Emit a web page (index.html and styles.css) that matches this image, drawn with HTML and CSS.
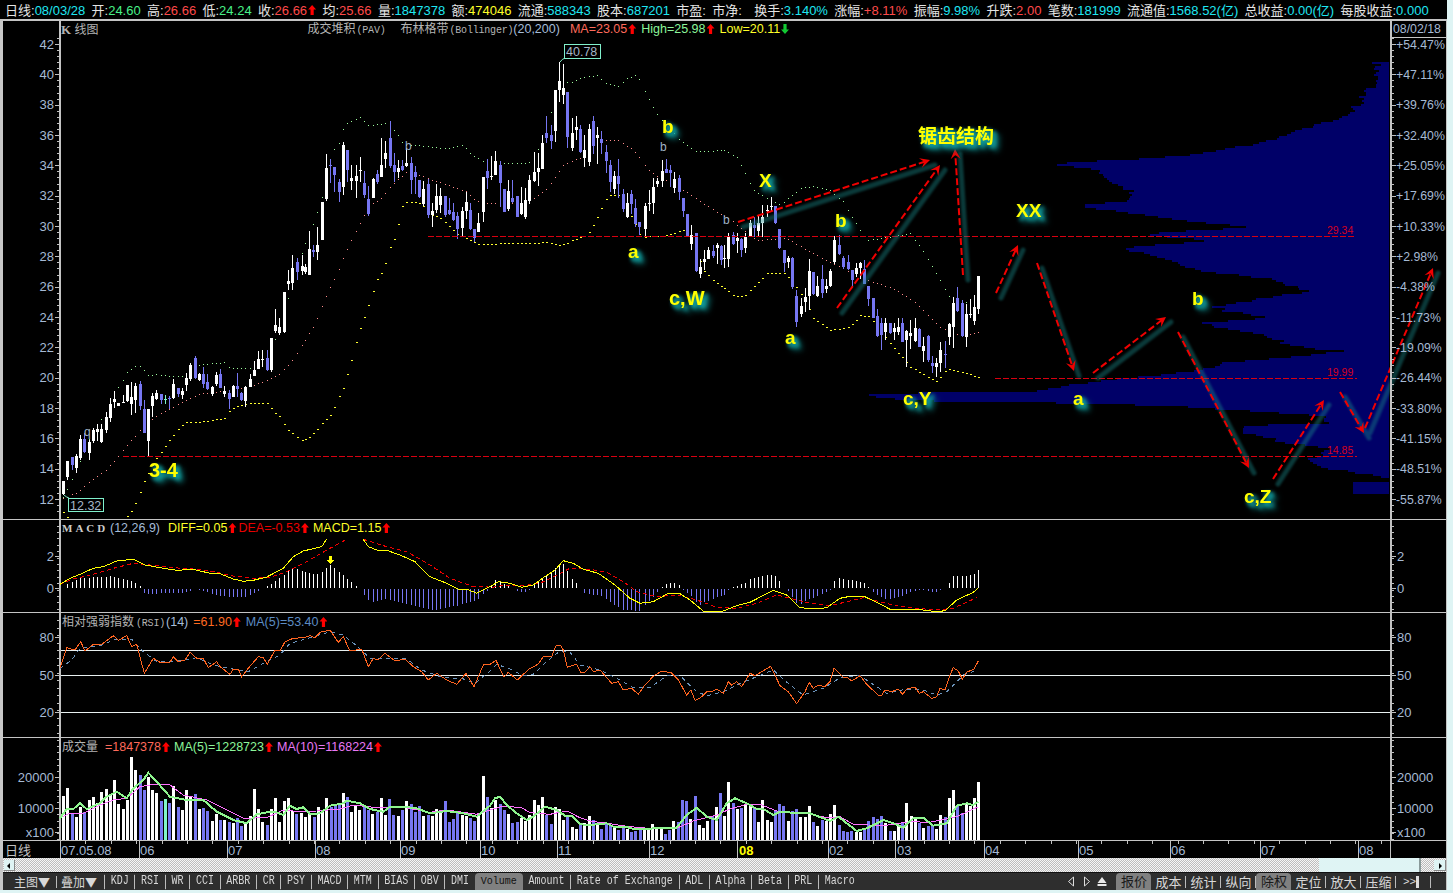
FILE: index.html
```html
<!DOCTYPE html>
<html lang="zh">
<head>
<meta charset="utf-8">
<title>K线图</title>
<link rel="stylesheet" href="styles.css">
</head>
<body>
<div class="app">
  <header class="quote">
    <span class="q"><span class="k">日线:</span><span class="cy">08/03/28</span></span>
    <span class="q"><span class="k">开:</span><span class="gr">24.60</span></span>
    <span class="q"><span class="k">高:</span><span class="rd">26.66</span></span>
    <span class="q"><span class="k">低:</span><span class="gr">24.24</span></span>
    <span class="q"><span class="k">收:</span><span class="rd">26.66</span><span class="up"></span></span>
    <span class="q"><span class="k">均:</span><span class="rd">25.66</span></span>
    <span class="q"><span class="k">量:</span><span class="cy">1847378</span></span>
    <span class="q"><span class="k">额:</span><span class="ye">474046</span></span>
    <span class="q"><span class="k">流通:</span><span class="cy">588343</span></span>
    <span class="q"><span class="k">股本:</span><span class="cy">687201</span></span>
    <span class="q"><span class="k">市盈:</span></span>
    <span class="q"><span class="k">市净:</span></span>
    <span class="q q-far"><span class="k">换手:</span><span class="cy">3.140%</span></span>
    <span class="q"><span class="k">涨幅:</span><span class="rd">+8.11%</span></span>
    <span class="q"><span class="k">振幅:</span><span class="cy">9.98%</span></span>
    <span class="q"><span class="k">升跌:</span><span class="rd">2.00</span></span>
    <span class="q"><span class="k">笔数:</span><span class="cy">181999</span></span>
    <span class="q"><span class="k">流通值:</span><span class="cy">1568.52(亿)</span></span>
    <span class="q"><span class="k">总收益:</span><span class="cy">0.00(亿)</span></span>
    <span class="q"><span class="k">每股收益:</span><span class="cy">0.000</span></span>
  </header>

  <main class="chart">
    <section class="panel panel-main">
      <svg id="main" class="plot" width="1443" height="498" viewBox="3 21 1443 498">
        <g id="main-g"></g>
        <text class="ax r" x="1393" y="33">08/02/18</text>
        <text class="ax e" x="54" y="48.5">42</text><text class="ax e" x="54" y="78.8">40</text><text class="ax e" x="54" y="109.2">38</text><text class="ax e" x="54" y="139.5">36</text>
        <text class="ax e" x="54" y="169.8">34</text><text class="ax e" x="54" y="200.2">32</text><text class="ax e" x="54" y="230.5">30</text><text class="ax e" x="54" y="260.8">28</text>
        <text class="ax e" x="54" y="291.2">26</text><text class="ax e" x="54" y="321.5">24</text><text class="ax e" x="54" y="351.8">22</text><text class="ax e" x="54" y="382.2">20</text>
        <text class="ax e" x="54" y="412.5">18</text><text class="ax e" x="54" y="442.8">16</text><text class="ax e" x="54" y="473.2">14</text><text class="ax e" x="54" y="503.5">12</text>
        <text class="ax r" x="1396" y="48.5">+54.47%</text><text class="ax r" x="1396" y="78.8">+47.11%</text><text class="ax r" x="1396" y="109.2">+39.76%</text><text class="ax r" x="1396" y="139.5">+32.40%</text>
        <text class="ax r" x="1396" y="169.8">+25.05%</text><text class="ax r" x="1396" y="200.2">+17.69%</text><text class="ax r" x="1396" y="230.5">+10.33%</text><text class="ax r" x="1396" y="260.8">+2.98%</text>
        <text class="ax r" x="1396" y="291.2">-4.38%</text><text class="ax r" x="1396" y="321.5">-11.73%</text><text class="ax r" x="1396" y="351.8">-19.09%</text><text class="ax r" x="1396" y="382.2">-26.44%</text>
        <text class="ax r" x="1396" y="412.5">-33.80%</text><text class="ax r" x="1396" y="442.8">-41.15%</text><text class="ax r" x="1396" y="473.2">-48.51%</text><text class="ax r" x="1396" y="503.5">-55.87%</text>

        <text class="lvl" x="1327" y="234">29.34</text>
        <text class="lvl" x="1327" y="376">19.99</text>
        <text class="lvl" x="1327" y="454">14.85</text>

        <rect class="box" x="564.5" y="44.5" width="36" height="14"></rect>
        <text class="boxt" x="566" y="56">40.78</text>
        <rect class="box" x="68.5" y="498.5" width="35" height="13"></rect>
        <text class="boxt" x="70" y="510">12.32</text>

        <text class="tiny" x="84" y="436">q</text>
        <text class="tiny" x="405" y="150">b</text>
        <text class="tiny" x="660" y="151">b</text>
        <text class="tiny" x="723" y="224">b</text>

        <text class="wave w20" x="149" y="477">3-4</text>
        <text class="wave" x="662" y="133">b</text>
        <text class="wave" x="628" y="258">a</text>
        <text class="wave w20" x="669" y="305">c,W</text>
        <text class="wave" x="759" y="187">X</text>
        <text class="wave" x="835" y="227">b</text>
        <text class="wave" x="785" y="344">a</text>
        <text class="wave" x="903" y="405">c,Y</text>
        <text class="wave" x="918" y="143">锯齿结构</text>
        <text class="wave" x="1016" y="217">XX</text>
        <text class="wave" x="1073" y="405">a</text>
        <text class="wave" x="1192" y="305">b</text>
        <text class="wave" x="1244" y="503">c,Z</text>
      </svg>
      <div class="legend legend-main">
        <span class="gy title-k"><b>K</b> 线图</span>
        <span class="gy spaced-a">成交堆积<small>(PAV)</small></span>
        <span class="gy spaced-b">布林格带<small>(Bollinger)</small></span>
        <span class="bl">(20,200)</span>
        <span class="sa"><span class="sal">MA=23.05</span><span class="up"></span></span>
        <span class="lg"><span class="lgr">High=25.98</span><span class="up"></span></span>
        <span class="lg"><span class="ye">Low=20.11</span><span class="down"></span></span>
      </div>
    </section>

    <section class="panel panel-macd">
      <svg id="macd" class="plot" width="1443" height="92" viewBox="3 520 1443 92">
        <g id="macd-g"></g>
        <text class="ax e" x="54" y="561">2</text><text class="ax e" x="54" y="593">0</text>
        <text class="ax" x="1397" y="561">2</text><text class="ax" x="1397" y="593">0</text>
      </svg>
      <div class="legend legend-macd">
        <span class="macd-t">MACD</span>
        <span class="bl">(12,26,9)</span>
        <span class="lg lg-diff"><span class="ye">DIFF=0.05</span><span class="up"></span></span>
        <span class="lg lg-dea"><span class="dr">DEA=-0.53</span><span class="up"></span></span>
        <span class="lg lg-val"><span class="ye">MACD=1.15</span><span class="up"></span></span>
      </div>
    </section>

    <section class="panel panel-rsi">
      <svg id="rsi" class="plot" width="1443" height="124" viewBox="3 613 1443 124">
        <g id="rsi-g"></g>
        <text class="ax e" x="54" y="642">80</text><text class="ax e" x="54" y="680">50</text><text class="ax e" x="54" y="717">20</text>
        <text class="ax" x="1397" y="642">80</text><text class="ax" x="1397" y="680">50</text><text class="ax" x="1397" y="717">20</text>
      </svg>
      <div class="legend legend-rsi">
        <span class="gy">相对强弱指数<small>(RSI)</small></span>
        <span class="bl">(14)</span>
        <span class="lg"><span class="or">=61.90</span><span class="up"></span></span>
        <span class="lg"><span class="st">MA(5)=53.40</span><span class="up"></span></span>
      </div>
    </section>

    <section class="panel panel-vol">
      <svg id="vol" class="plot" width="1443" height="102" viewBox="3 738 1443 102">
        <g id="vol-g"></g>
        <text class="ax e" x="54" y="782">20000</text><text class="ax e" x="54" y="813">10000</text><text class="ax e" x="54" y="837">x100</text>
        <text class="ax" x="1397" y="782">20000</text><text class="ax" x="1397" y="813">10000</text><text class="ax" x="1397" y="837">x100</text>
      </svg>
      <div class="legend legend-vol">
        <span class="gy">成交量</span>
        <span class="lg"><span class="sal">=1847378</span><span class="up"></span></span>
        <span class="lg"><span class="lgr">MA(5)=1228723</span><span class="up"></span></span>
        <span class="lg"><span class="pk">MA(10)=1168224</span><span class="up"></span></span>
      </div>
    </section>

    <div class="dates">
      <svg id="dates" class="plot" width="1443" height="17" viewBox="3 841 1443 17">
        <g id="dates-g"></g>
        <text class="dt gy-t" x="5" y="855">日线</text>
        <text class="dt" x="61" y="855">07.05.08</text><text class="dt" x="140" y="855">06</text><text class="dt" x="228" y="855">07</text>
        <text class="dt" x="316" y="855">08</text><text class="dt" x="401" y="855">09</text><text class="dt" x="481" y="855">10</text>
        <text class="dt" x="558" y="855">11</text><text class="dt" x="650" y="855">12</text><text class="dt dt-y" x="739" y="855">08</text>
        <text class="dt" x="829" y="855">02</text><text class="dt" x="897" y="855">03</text><text class="dt" x="985" y="855">04</text>
        <text class="dt" x="1079" y="855">05</text><text class="dt" x="1171" y="855">06</text><text class="dt" x="1261" y="855">07</text><text class="dt" x="1359" y="855">08</text>
      </svg>
    </div>

    <div class="scrollbar">
      <span class="sb-btn sb-left"></span>
      <span class="sb-track"></span>
      <span class="sb-thumb"></span>
      <span class="sb-gap"></span>
      <span class="sb-btn sb-right"></span>
    </div>

    <nav class="tabs">
      <span class="tab cn first">主图▼</span><span class="tab cn">叠加▼</span>
      <span class="tab">KDJ</span><span class="tab">RSI</span><span class="tab">WR</span><span class="tab">CCI</span><span class="tab">ARBR</span><span class="tab">CR</span><span class="tab">PSY</span><span class="tab">MACD</span><span class="tab">MTM</span><span class="tab">BIAS</span><span class="tab">OBV</span><span class="tab">DMI</span>
      <span class="tab active">Volume</span>
      <span class="tab nb">Amount</span><span class="tab">Rate of Exchange</span><span class="tab">ADL</span><span class="tab">Alpha</span><span class="tab">Beta</span><span class="tab">PRL</span><span class="tab">Macro</span>
      <span class="tools">
        <span class="tool-ic">
          <svg width="9" height="11" viewBox="0 0 9 11"><path d="M6.5 1 1.5 5.5 6.5 10z" fill="none" stroke="#ddd"/></svg>
          <svg width="9" height="11" viewBox="0 0 9 11"><path d="M2.5 1 7.5 5.5 2.5 10z" fill="none" stroke="#ddd"/></svg>
          <svg width="10" height="11" viewBox="0 0 10 11"><path d="M5 1 9.5 7H.5z M.5 8h9v2h-9z" fill="#e8e8e8"/></svg>
        </span>
        <span class="tool active">报价</span><span class="tool">成本</span><span class="tool">统计</span><span class="tool">纵向</span><span class="tool active">除权</span><span class="tool">定位</span><span class="tool">放大</span><span class="tool">压缩</span><span class="tool more">&gt;&gt;<i class="bar"></i></span>
      </span>
    </nav>
  </main>
</div>
<script src="chart.js"></script>
</body>
</html>
```
FILE: styles.css
```css
* { box-sizing: border-box; }
html, body { margin: 0; height: 100%; overflow: hidden; background: #dff4f4; }
body { font: 13px/1 "Liberation Sans", "Noto Sans CJK SC", sans-serif; color: #ccc; }

.app { width: 1447px; display: flex; flex-direction: column; }

.quote { height: 21px; padding: 3px 0 0 5px; background: #000; border-bottom: 2px solid #c4c4c4; display: flex; gap: 6.3px; white-space: nowrap; overflow: hidden; }
.q { display: inline-flex; align-items: center; height: 14px; }
.q-far { margin-left: 6px; }
.k { color: #e4e4e4; }
.cy { color: #1fe6f2; }
.gr { color: #48f088; }
.rd { color: #ff4a4a; }
.ye { color: #ffff28; }
.sal { color: #ff6a5a; }
.lgr { color: #8cf59a; }
.pk { color: #e878f4; }
.dr { color: #e80000; }
.or { color: #ff6a20; }
.st { color: #5c8cc4; }
.bl { color: #a4bcd8; }
.gy { color: #b4b4b4; font-size: 12px; }
.gy small { font: 10px "Liberation Mono", monospace; letter-spacing: -.2px; }

.up, .down { display: inline-block; width: 8px; height: 10px; margin-left: 1px; clip-path: polygon(50% 0, 100% 45%, 70% 45%, 70% 100%, 30% 100%, 30% 45%, 0 45%); background: #f00; }
.down { background: #12c832; transform: rotate(180deg); }

.chart { border-left: 3px solid #c8c8c8; border-right: 1px solid #c4c4c4; background: #000; display: flex; flex-direction: column; }

.panel { position: relative; background: #000; border-bottom: 1px solid #c4c4c4; }
.panel-main { height: 499px; }
.panel-macd { height: 93px; }
.panel-rsi { height: 125px; }
.panel-vol { height: 103px; }
.plot { display: block; overflow: hidden; }

.legend { position: absolute; display: flex; align-items: center; white-space: nowrap; height: 14px; font-size: 12.5px; }
.lg, .sa { display: inline-flex; align-items: center; }
.legend-main { left: 58px; top: 1px; }
.title-k b { font-family: "Liberation Serif", serif; font-size: 13px; }
.spaced-a { margin-left: 209px; }
.spaced-b { margin-left: 15px; }
.legend-main .gy small { margin-left: 1px; }
.legend-main .sa { margin-left: 10px; }
.legend-main .lg { margin-left: 5px; }
.legend-macd { left: 59px; top: 1px; gap: 4px; }
.macd-t { font: bold 11px "Liberation Serif", serif; letter-spacing: 3px; color: #ccc; width: 44px; }
.lg-diff { margin-left: 4px; }
.lg-dea { margin-left: -2px; }
.lg-val { margin-left: 0; }
.legend-rsi { left: 59px; top: 2px; gap: 5px; }
.legend-rsi .gy small { margin-left: 2px; }
.legend-rsi .bl { margin-left: -4px; }
.legend-vol { left: 59px; top: 2px; gap: 4px; }
.legend-vol .gy { margin-right: 3px; }

.ax { fill: #a6bad4; font-size: 13px; }
.r { font-size: 12.3px; }
.e { text-anchor: end; }
.lvl { fill: #d40020; font-size: 10.5px; }
.box { fill: #000; stroke: #80f0cc; stroke-width: 1; }
.boxt { fill: #a6b6c8; font-size: 12.5px; }
.tiny { fill: #a0b4c8; font-size: 12px; }
.wave { fill: #ffff00; font: bold 19px "Liberation Sans", "Noto Sans CJK SC", sans-serif; filter: drop-shadow(3px 3px 2px #10a4a4) drop-shadow(3px 3px 2px #0e8c8c); }
.w20 { font-size: 20px; }

.dates { height: 17px; background: #000; }
.dt { fill: #a6bad4; font-size: 13px; }
.gy-t { fill: #c0c0c0; font-size: 13px; }
.dt-y { fill: #ffff00; font-weight: bold; font-size: 13px; }

.scrollbar { height: 14px; display: flex; align-items: center; background: repeating-conic-gradient(#f6f6f6 0 25%, #bdbdbd 0 50%) 0 0 / 2px 2px; }
.sb-track { flex: 1; }
.sb-btn { position: relative; width: 11px; height: 11px; background: #dff4f4; border-right: 1px solid #888; border-bottom: 1px solid #888; }
.sb-left { margin-left: 1px; }
.sb-right { width: 12px; }
.sb-btn::after { content: ""; position: absolute; top: 3px; border: 3px solid transparent; }
.sb-left::after { left: 0; border-right-color: #000; }
.sb-right::after { left: 5px; border-left-color: #000; }
.sb-thumb { width: 102px; height: 14px; background: #dff4f4; border-right: 2px solid #8a9a9a; }
.sb-gap { width: 13px; }

.tabs { height: 18px; background: #2e2e2e; border-top: 1px solid #111; display: flex; align-items: center; color: #d8d8d8; font: 10px "Liberation Mono", monospace; white-space: nowrap; }
.tab { height: 12px; line-height: 12px; padding: 0 5.7px; border-left: 1px solid #bbb; transform: scaleY(1.2); }
.tab.cn { font: 12px/12px "Noto Sans CJK SC", sans-serif; padding: 0 7px 0 4px; transform: none; }
.tab.first { border-left: 0; padding-left: 11px; padding-right: 6px; }
.tab.active { height: 17px; line-height: 17px; width: 48px; background: #808080; color: #111; border: 0; border-radius: 4px 4px 0 0; text-align: center; padding: 0; transform: none; }
.tab.nb { border-left: 0; }
.tools { display: flex; align-items: center; margin-left: auto; padding-right: 15px; }
.tool-ic { display: flex; gap: 6px; margin-right: 9px; align-items: center; }
.tool { height: 12px; line-height: 12px; font: 13px/12px "Noto Sans CJK SC", sans-serif; padding: 0 3px 0 4px; border-right: 1px solid #bbb; width: 35px; text-align: center; }
.tool.active { height: 17px; line-height: 16px; background: #808080; color: #1a1a1a; border: 0; border-radius: 4px 4px 0 0; }
.tool.more { display: flex; align-items: center; font: 11px "Liberation Mono", monospace; padding-left: 7px; }
.bar { display: inline-block; width: 3px; height: 12px; background: #ddd; }
```
FILE: chart.js
```js
var NS = 'http://www.w3.org/2000/svg';
function el(p, tag, a) { var e = document.createElementNS(NS, tag); for (var k in a) e.setAttribute(k, a[k]); p.appendChild(e); return e; }
function shape(g, d, fill) { return el(g, 'path', { d: d, fill: fill, 'shape-rendering': 'crispEdges' }); }
function pts(ox, oy, a) { var r = []; for (var i = 0; i < a.length; i += 2) r.push([ox + a[i] / 3, oy + a[i + 1] / 3]); return r; }
function dstr(p) { return 'M' + p.map(function (q) { return q[0].toFixed(1) + ' ' + q[1].toFixed(1); }).join('L'); }
function line(g, p, color, w, dash) { var a = { d: dstr(p), fill: 'none', stroke: color, 'stroke-width': w || 1, 'shape-rendering': 'crispEdges' }; if (dash) a['stroke-dasharray'] = dash; return el(g, 'path', a); }
function interp(p, x) {
  if (x <= p[0][0]) return p[0][1];
  for (var i = 1; i < p.length; i++) if (x <= p[i][0]) { var t = (x - p[i - 1][0]) / (p[i][0] - p[i - 1][0]); return p[i - 1][1] + t * (p[i][1] - p[i - 1][1]); }
  return p[p.length - 1][1];
}
var FRAME = '#c4c4c4', WHITE = '#ffffff', BLUE = '#7676f2', MINT = '#80f4c8';

/* candles: [x, colour(0 white,1 blue,2 mint), bodyTop, bodyBottom, high, low], in zoom units */
var A = [[190,0,603,642,603,645],[202,0,543,590,543,600],[217,1,531,556,531,570],[229,0,528,565,522,578],[241,0,477,533,465,540],[253,1,476,515,460,520],[268,0,486,518,480,540],[280,0,450,482,445,488],[292,0,448,456,432,482],[304,0,447,485,433,488],[319,0,411,450,395,458],[331,0,372,415,355,426],[343,0,357,367,333,383],[355,0,369,377,369,377],[370,0,367,369,345,369],[382,0,315,363,315,365],[394,0,351,372,307,404],[406,0,318,360,308,400],[421,1,312,378,303,390],[433,1,387,458,360,458],[445,0,387,483,387,528],[457,0,349,378,338,411],[469,0,340,357,330,360],[484,1,343,360,343,372],[496,2,356,358,345,372],[508,1,355,358,347,386],[520,0,312,355,296,358],[535,1,324,343,324,352],[547,0,334,344,324,358],[559,0,294,316,280,332],[571,0,255,296,250,303],[586,1,234,295,228,296],[598,0,282,300,280,303],[610,1,282,312,262,324],[622,1,306,327,282,330],[637,0,320,342,318,348],[649,0,285,313,277,318],[661,1,283,323,268,325],[673,0,334,342,318,350],[688,1,339,357,330,388],[700,0,318,350,315,352],[712,1,318,327,280,352],[724,1,339,361,335,363],[736,0,321,362,318,380],[751,0,297,320,283,320],[763,0,270,288,243,288],[775,0,238,266,212,266],[787,0,237,238,210,262],[802,1,234,270,210,272],[814,0,174,270,174,276],[826,0,135,153,87,158],[838,0,142,158,115,164],[853,0,36,155,36,158],[865,0,4,12,-30,30],[877,0,-36,9,-75,30],[891,1,-54,-24,-66,0]];
var B = [[5,0,693,708,660,720],[16,0,695,710,688,718],[28,0,642,720,588,720],[40,1,645,650,630,665],[52,0,630,650,575,675],[67,0,500,615,500,615],[79,0,400,492,358,497],[91,1,390,392,373,445],[103,1,396,420,396,470],[118,1,441,471,433,500],[130,0,330,455,322,480],[142,1,345,405,345,440],[154,0,430,438,390,465],[169,0,423,438,390,488],[181,0,405,407,366,440],[193,1,444,481,408,490],[205,1,491,538,454,542],[220,0,432,488,430,490],[232,1,417,442,405,448],[244,0,390,425,310,425],[256,0,354,372,318,400],[271,1,309,393,258,398],[283,1,390,411,353,440],[295,0,399,411,376,430],[307,1,394,405,376,408],[319,0,384,394,340,395],[334,1,384,435,366,478],[346,1,411,427,393,478],[358,1,435,486,435,488],[370,0,462,507,438,512],[385,1,447,540,432,548],[397,0,528,540,503,576],[409,0,483,525,447,535],[421,0,483,510,458,535],[436,1,483,540,483,545],[448,1,525,537,490,540],[460,1,531,555,503,558],[472,1,543,582,530,612],[487,0,528,580,516,602],[499,0,501,528,470,552],[511,1,525,582,503,585],[523,1,582,608,582,622],[535,0,564,590,534,592],[550,0,426,531,426,561],[562,1,408,430,372,462],[574,0,423,426,363,435],[586,0,378,420,348,420],[601,1,390,444,378,516],[613,1,462,531,462,532],[625,0,468,522,435,528],[637,1,489,501,435,505],[652,1,484,546,484,546],[664,0,504,537,457,540],[676,0,495,546,460,552],[688,0,435,498,420,508],[703,0,411,438,351,440],[715,0,399,411,355,453],[727,0,324,402,300,402],[739,1,294,309,243,325],[754,1,300,318,270,342],[766,0,165,288,165,320],[778,0,138,165,81,200],[790,0,159,180,87,207],[802,1,171,306,171,340],[817,0,294,340,250,348],[829,0,276,285,243,315],[841,1,282,351,270,355],[853,0,345,369,300,396],[868,0,282,381,267,393],[880,1,258,333,243,357],[892,0,300,309,276,387],[904,1,312,324,288,357],[919,1,351,378,330,414],[931,1,390,441,375,470],[943,0,423,462,408,477],[955,1,423,447,372,490],[970,1,477,522,462,530],[982,0,504,546,474,548],[994,1,477,507,465,537],[1006,1,519,567,492,575],[1018,1,561,575,561,600]];
var C = [[134,0,288,356,280,380],[146,0,280,281,240,303],[158,0,232,280,205,312],[170,0,213,222,205,232],[185,0,182,212,150,232],[197,1,177,188,148,190],[209,1,180,188,165,230],[221,0,208,234,187,250],[236,1,205,245,195,270],[248,1,265,303,265,320],[260,1,312,378,312,380],[272,0,376,402,345,420],[287,1,370,483,370,485],[299,0,471,492,448,504],[311,0,447,455,420,480],[323,0,420,447,410,448],[338,1,423,437,405,445],[350,0,405,415,400,462],[362,1,408,450,405,465],[373,0,445,446,405,475],[385,0,380,447,368,470],[400,1,375,403,365,405],[412,0,385,392,370,430],[424,1,388,420,385,440],[436,0,380,414,370,430],[451,0,340,380,330,380],[463,1,345,355,320,380],[475,0,340,362,318,378],[487,0,322,338,285,380],[502,0,300,302,285,320],[514,0,288,290,262,305],[526,1,288,340,288,342],[538,1,358,414,358,416],[553,1,420,460,420,487],[565,0,443,457,438,475],[577,1,444,530,440,538],[589,1,558,636,540,650],[604,0,588,613,565,622],[616,0,560,575,535,605],[628,0,484,557,448,600],[640,1,486,552,486,556],[652,0,528,557,498,560],[667,1,507,548,465,565],[679,0,528,537,508,548],[691,0,483,527,478,530],[703,0,390,455,378,462],[718,1,405,432,375,435],[730,1,443,472,438,476],[745,1,455,478,435,480],[757,1,480,510,480,530],[769,0,474,492,458,500],[781,0,458,475,455,507],[793,1,478,522,450,522],[805,1,528,568,528,588],[820,1,565,625,565,625],[832,1,618,678,598,680],[844,1,640,674,625,720],[856,0,640,667,625,690],[871,1,638,668,638,672],[883,0,654,667,640,690],[895,0,650,665,625,675],[907,1,638,695,625,695],[919,0,662,690,660,770],[931,0,668,678,630,718],[946,0,654,692,625,695],[958,1,657,710,655,712],[970,0,708,722,680,755],[985,1,677,750,675,755],[997,1,758,768,738,790],[1009,0,758,772,745,800],[1021,0,720,760,695,785],[1036,1,732,734,692,775],[1048,0,642,682,640,705],[1060,0,578,652,560,713],[1072,1,565,603,530,606],[1087,1,578,678,570,680],[1099,0,612,680,582,712],[1111,0,612,614,568,625],[1123,0,592,632,555,645],[1135,0,498,597,498,612]];
var candles = [];
function addC(ox, oy, rows) { rows.forEach(function (r) { candles.push({ x: Math.round(ox + r[0] / 3), c: r[1], t: Math.round(oy + r[2] / 3), b: Math.round(oy + r[3] / 3), h: Math.round(oy + r[4] / 3), l: Math.round(oy + r[5] / 3) }); }); }
addC(0, 280, A); addC(300, 35, B); addC(600, 110, C);
function colourAt(x) { var best = candles[0]; candles.forEach(function (c) { if (Math.abs(c.x - x) < Math.abs(best.x - x)) best = c; }); return best.c; }
var COLS = [WHITE, BLUE, MINT];

/* main panel */
(function () {
  var g = document.getElementById('main-g'), i, y;
  /* volume profile */
  var prof = [[62,1377],[85,1375],[90,1365],[100,1362],[115,1345],[125,1312],[135,1285],[145,1245],[155,1185],[163,1052],[170,1100],[180,1110],[190,1130],[200,1127],[205,1072],[212,1130],[222,1203],[226,1250],[233,1145],[240,1207],[247,1122],[255,1150],[262,1175],[270,1205],[278,1270],[285,1290],[290,1310],[295,1280],[305,1215],[310,1225],[317,1270],[322,1205],[328,1225],[335,1270],[345,1290],[350,1340],[355,1297],[362,1225],[370,1197],[375,1147],[380,1100],[385,1063],[390,1040],[393,860],[397,875],[400,930],[403,1113],[406,1187],[410,1250],[415,1320],[422,1330],[425,1242],[432,1243],[437,1270],[442,1287],[447,1330],[455,1320],[460,1307],[467,1318],[472,1360],[478,1390],[481,1353],[493,1353]];
  var seed = 7, d = '';
  function rnd() { seed = (seed * 16807) % 2147483647; return seed / 2147483647; }
  for (y = 62; y < 493; y += 2) {
    if (y >= 478 && y < 481) continue;
    var lx = Math.round(interp(prof, y) + (y > 480 ? 0 : (rnd() - .5) * 10));
    if (lx < 1389) d += 'M' + lx + ' ' + y + 'H1389V' + (y + 2) + 'H' + lx + 'Z';
  }
  shape(g, d, '#000068');

  /* Bollinger bands */
  var upper = pts(0, 280, [190,650,230,570,260,490,290,435,305,415,320,392,332,360,345,335,370,297,382,275,405,257,420,258,433,272,445,285,470,282,490,285,540,290,560,280,570,262,590,258,610,252,650,248,672,247,690,262,720,265,760,265,825,178,865,52])
    .concat(pts(300, 35, [15,625,40,565,65,490,100,345,118,322,130,278,145,260,180,247,205,270,260,265,270,270,295,300,310,328,370,332,420,338,450,338,490,330,510,355,550,380,610,385,690,382,705,365,730,300,750,240,780,140,815,140,845,127,890,120,920,145,955,152,980,130,1010,118]))
    .concat(pts(600, 110, [170,12,240,90,290,125,375,120,410,140,435,190,465,245,540,285,600,235,640,228,690,240,730,275,755,320,800,390,870,380,930,370,960,410,985,450,1020,510,1060,580,1130,570]));
  var mid = pts(0, 280, [190,655,230,637,280,595,320,568,355,527,395,478,420,450,445,428,470,405,510,385,550,365,600,340,650,335,700,330,750,318,800,302,840,280,865,255,900,205,945,130,990,20])
    .concat(pts(300, 35, [118,700,130,667,155,610,180,565,205,515,245,487,275,450,320,410,360,420,400,435,450,452,500,470,525,495,570,505,640,505,700,490,740,462,790,388,840,368,870,340,920,313]))
    .concat(pts(600, 110, [60,92,100,120,150,185,250,240,310,280,400,335,470,390,560,385,640,430,700,460,800,510,880,535,950,580,1020,650,1090,680,1135,665]));
  var lower = pts(0, 280, [190,697,202,712,290,800,380,710,395,690,405,670,420,637,433,600,470,530,483,515,508,480,520,462,535,445,558,427,600,425,672,415,690,390,712,377,760,368,800,368,825,400,838,410,865,452,905,482,930,468,990,405,1030,322,1080,145,1130,0])
    .concat(pts(300, 35, [245,710,257,677,270,637,285,605,295,562,305,515,320,498,360,505,385,525,395,540,420,548,470,595,535,628,600,625,690,625,740,620,780,632,830,610,860,600,880,570,905,515]))
    .concat(pts(600, 110, [25,255,60,255,100,330,120,380,190,378,250,360,270,375,310,480,340,510,400,555,430,560,470,520,500,490,555,488,610,560,640,625,690,660,750,650,780,615,810,620,870,700,930,770,1010,815,1040,775,1135,800]));
  [[upper,'#9dfc9d',1],[mid,'#ff8c8c',1],[lower,'#ffff30',2]].forEach(function (s) {
    var dd = '';
    candles.forEach(function (c) { var yy = Math.round(interp(s[0], c.x)); dd += 'M' + c.x + ' ' + yy + 'h' + s[2] + 'v1h-' + s[2] + 'z'; });
    shape(g, dd, s[1]);
  });

  /* candles */
  [0, 1, 2].forEach(function (k) {
    var dd = '';
    candles.forEach(function (c) {
      if (c.c !== k) return;
      dd += 'M' + c.x + ' ' + c.h + 'h1V' + c.l + 'h-1z';
      dd += 'M' + (c.x - 1) + ' ' + c.t + 'h3V' + Math.max(c.b, c.t + 1) + 'h-3z';
    });
    shape(g, dd, COLS[k]);
  });

  /* level lines */
  [[428,1355,236],[995,1357,378],[123,1357,456]].forEach(function (l) {
    line(g, [[l[0], l[2] + .5], [l[1], l[2] + .5]], '#d80010', 1, '6 2');
  });

  /* callout connectors */
  el(g, 'path', { d: 'M560 62Q562 59 565 58M64 495Q66 497 69 498', fill: 'none', stroke: '#80f0cc' });

  /* arrows */
  var arrows = [[738,222,930,160],[837,308,940,165],[963,275,955,149],[996,293,1018,245],[1037,263,1074,371],[1093,373,1166,317],[1178,332,1249,468],[1273,479,1324,400],[1340,392,1364,433],[1365,428,1433,268]];
  var defs = g.parentNode.insertBefore(document.createElementNS(NS, 'defs'), g);
  var flt = el(defs, 'filter', { id: 'soft', x: 0, y: 0, width: 1453, height: 893, filterUnits: 'userSpaceOnUse', 'color-interpolation-filters': 'sRGB' });
  el(flt, 'feGaussianBlur', { stdDeviation: 1.2 });
  var sh = el(g, 'g', { filter: 'url(#soft)', opacity: .42 });
  arrows.forEach(function (a) {
    el(sh, 'line', { x1: a[0] + 5, y1: a[1] + 5, x2: a[2] + 5, y2: a[3] + 5, stroke: '#1a8a8a', 'stroke-width': 5, 'stroke-linecap': 'round' });
  });
  arrows.forEach(function (a) {
    var dx = a[2] - a[0], dy = a[3] - a[1], L = Math.sqrt(dx * dx + dy * dy), ux = dx / L, uy = dy / L;
    el(g, 'line', { x1: a[0], y1: a[1], x2: a[2] - ux * 5, y2: a[3] - uy * 5, stroke: '#f00000', 'stroke-width': 2, 'stroke-dasharray': '7 3' });
    var bx = a[2] - ux * 10, by = a[3] - uy * 10, nx = -uy * 5, ny = ux * 5;
    el(g, 'path', { d: 'M' + a[2] + ' ' + a[3] + 'L' + (bx + nx) + ' ' + (by + ny) + 'L' + (a[2] - ux * 6) + ' ' + (a[3] - uy * 6) + 'L' + (bx - nx) + ' ' + (by - ny) + 'Z', fill: '#f00000' });
  });

  /* axes */
  var ticks = '';
  for (i = -1; i < 78; i++) {
    y = Math.round(44 + 6.066 * i);
    if (y > 517) break;
    var major = (i % 5 === 0 && i >= 0);
    ticks += 'M' + (major ? 55 : 57) + ' ' + y + 'H59V' + (y + 1) + 'H' + (major ? 55 : 57) + 'Z';
    ticks += 'M1391 ' + y + 'H' + (major ? 1396 : 1394) + 'V' + (y + 1) + 'H1391Z';
  }
  shape(g, ticks, '#c0c0c0');
  shape(g, 'M59 21h2V519h-2zM1390 21h2V519h-2zM1391 37H1446V38H1391Z', FRAME);
})();

/* generic axis frame for lower panels */
function frame(g, top, bot, majors, step) {
  var d = 'M59 ' + top + 'h2V' + bot + 'h-2zM1390 ' + top + 'h2V' + bot + 'h-2z';
  majors.forEach(function (m) { d += 'M55 ' + m + 'H59v1H55zM1391 ' + m + 'H1396v1H1391z'; });
  for (var y = majors[0] % step + top; y < bot; y += step) {
    var yy = Math.round(y);
    d += 'M57 ' + yy + 'H59v1H57zM1391 ' + yy + 'H1394v1H1391z';
  }
  shape(g, d, '#c0c0c0');
}

/* MACD */
(function () {
  var g = document.getElementById('macd-g');
  frame(g, 520, 612, [556, 588], 6.4);
  var env = pts(0, 0, [200,12,240,30,340,35,410,15,422,3,433,-15,560,-10,585,0,600,-2,640,-18,690,-25,740,-25,765,-10,790,2,815,12,880,62,920,45,955,40,990,70,1020,45,1070,5,1080,0,1092,-18,1110,-40,1160,-30,1240,-50,1300,-65,1370,-50,1430,-35])
    .concat(pts(490, 0, [4,8,16,25,28,22,43,12,55,8,67,0,82,-8,106,-8,120,0,133,10,157,30,170,38,195,60,220,72,232,48,247,25,259,15,270,0,283,-12,310,-18,334,-20,349,-30,373,-50,400,-62,436,-65,451,-65,463,-50,499,-12,514,3,526,12,550,15,565,10,575,0,589,-12,601,-20,628,-48,640,-40,667,-30,703,-18,715,-2,730,3,766,15,781,28,832,40,856,35,868,20,880,2,895,-5,919,-45,931,-45,958,-30,1000,-15,1020,-2,1033,22,1048,30,1099,20,1123,15,1135,3,1150,-10,1186,-32,1225,-25,1262,-8,1290,-3,1340,-10,1352,-3,1366,0,1378,15,1390,38,1417,35,1453,42,1465,55]));
  var up = '', dn = '';
  candles.forEach(function (c) {
    if (c.x < 66) return;
    var v = Math.round(interp(env, c.x));
    if (v > 0) up += 'M' + c.x + ' ' + (588 - v) + 'h1V588h-1z';
    else if (v < 0) dn += 'M' + c.x + ' 589h1V' + (589 - v) + 'h-1z';
  });
  shape(g, up, WHITE); shape(g, dn, BLUE);
  var y1 = pts(0, 515, [180,208,210,190,240,178,280,160,310,155,350,138,400,133,435,150,480,158,530,166,580,163,630,175,660,176,700,192,730,199,760,196,800,186,850,160,880,125,910,108,965,95,980,72]);
  var y2 = pts(0, 515, [1090,73,1105,95,1130,105,1160,106,1200,120,1245,140,1290,185,1340,205,1375,222,1400,222,1430,235,1460,220])
    .concat(pts(490, 515, [0,215,25,200,60,205,95,217,130,210,160,188,195,165,220,137,250,145,280,163,325,175,375,210,420,250,450,265,490,260,535,235,570,236,600,255,640,288,700,288,740,272,780,262,850,226,890,240,930,278,975,282,1010,278,1050,250,1080,244,1120,243,1160,262,1200,283,1240,285,1280,283,1340,290,1365,287,1400,255,1450,232,1465,218]));
  var r1 = pts(0, 515, [180,208,220,192,280,178,340,160,400,145,450,150,520,158,590,163,650,172,700,183,760,190,810,187,860,170,920,140,990,100,1040,73]);
  var r2 = pts(0, 515, [1090,73,1150,92,1220,110,1290,150,1350,190,1420,215,1460,215])
    .concat(pts(490, 515, [0,218,50,210,100,212,150,205,200,180,240,160,300,163,350,172,400,200,440,230,500,245,560,240,620,255,680,277,740,280,800,265,860,240,920,255,960,265,1020,272,1080,258,1120,248,1200,268,1280,280,1340,285,1390,280,1460,248]));
  line(g, r1, '#f00000', 1, '4 3'); line(g, r2, '#f00000', 1, '4 3');
  line(g, y1, '#ffff00'); line(g, y2, '#ffff00');
  /* yellow signal arrow */
  shape(g, 'M329 556h3v4h2l-3.5 4l-3.5 -4h2z', '#ffff00');
})();

/* RSI */
(function () {
  var g = document.getElementById('rsi-g');
  frame(g, 613, 737, [637, 675, 712], 7.5);
  shape(g, 'M61 650H1390v1H61zM61 675H1390v1H61zM61 712H1390v1H61z', '#e8f0f0');
  var o = pts(0, 515, [180,460,200,398,225,405,242,380,255,408,280,388,305,388,340,362,355,376,380,362,395,395,410,388,433,475,460,430,480,442,510,442,520,425,535,440,555,435,570,412,590,430,610,430,625,458,650,440,660,455,690,478,700,462,715,462,725,485,745,460,775,425,790,428,802,448,825,405,840,408,855,380,880,370,910,368,930,362,945,368,960,352,990,345,1015,382,1030,365,1050,408,1085,402,1105,455,1120,430,1135,435,1155,415,1185,438,1215,432,1240,455,1265,470,1285,495,1310,475,1340,495,1370,508,1398,475,1422,515,1450,450])
    .concat(pts(490, 515, [0,448,18,436,42,487,55,472,82,495,95,482,118,462,145,447,160,425,185,425,198,392,212,392,220,405,232,457,260,447,272,472,285,472,300,455,310,470,330,465,365,505,385,500,400,525,425,520,445,538,465,510,490,484,515,468,545,474,565,495,590,540,603,525,615,556,630,550,650,530,670,528,680,522,700,535,715,500,725,510,740,500,755,515,780,475,795,482,842,454,870,512,895,530,920,566,945,530,958,502,970,520,985,510,1005,515,1020,500,1032,460,1060,487,1072,487,1085,498,1110,482,1130,508,1165,541,1175,541,1185,525,1205,530,1225,523,1238,538,1250,522,1275,516,1288,535,1300,530,1325,550,1340,545,1350,520,1365,525,1380,480,1390,458,1405,468,1417,492,1430,472,1452,462,1465,438]));
  var m = pts(0, 515, [180,460,215,435,240,400,300,392,350,372,395,372,430,410,470,440,530,438,590,428,640,450,700,462,745,470,790,445,840,420,870,385,930,368,990,350,1030,360,1070,392,1110,430,1180,430,1220,432,1265,465,1330,488,1385,490,1425,505])
    .concat(pts(490, 515, [0,468,20,448,60,462,100,482,130,478,170,440,210,408,240,412,270,450,330,465,380,490,430,518,480,518,530,482,570,482,620,530,650,542,700,530,740,510,800,485,850,465,900,510,940,540,1000,520,1050,488,1110,482,1160,515,1190,535,1250,522,1300,525,1340,540,1370,530,1420,480,1465,465]));
  line(g, m, '#6c94bc', 1, '4 4');
  line(g, o, '#ff6420');
})();

/* Volume */
(function () {
  var g = document.getElementById('vol-g');
  frame(g, 738, 840, [777, 808, 832], 6.2);
  var h1 = [190,183,202,158,217,235,229,245,241,215,253,230,268,195,280,185,292,205,304,170,319,162,331,180,343,135,355,207,370,222,382,195,394,66,406,105,421,120,433,165,445,125,457,165,469,174,484,198,496,192,508,204,520,153,535,216,547,225,559,165,571,185,586,177,598,222,610,218,622,228,637,258,649,238,661,255,673,255,688,260,700,263,712,248,724,272,736,265,751,243,763,162,775,222,787,260,802,270,814,222,826,188,838,260,853,197,865,188,877,228,889,236,904,233,916,245,928,235,943,245,955,215,967,232,979,189,994,215,1006,208,1018,210,1030,174,1042,186,1054,230,1066,212,1078,225,1093,214,1105,225,1117,236,1132,232,1144,188,1156,240,1168,192,1180,240,1195,242,1207,225,1219,198,1234,208,1246,230,1258,213,1270,243,1285,240,1297,242,1309,222,1321,228,1336,198,1348,262,1360,252,1372,235,1387,240,1399,243,1411,248,1423,258,1435,240,1450,123,1462,186];
  var h2 = [4,220,16,195,31,208,43,225,55,237,67,265,82,262,94,250,106,258,118,240,133,195,145,210,157,186,169,240,184,267,196,216,208,223,220,255,232,244,247,276,259,282,271,270,283,265,298,243,310,256,322,265,334,281,349,268,361,272,373,280,385,285,400,278,412,283,424,291,436,287,451,284,463,283,475,284,487,267,499,280,514,283,526,297,538,285,550,258,565,262,577,195,589,198,601,252,616,183,628,270,640,278,652,258,667,243,679,216,691,174,703,243,715,141,730,204,742,222,754,219,766,207,781,210,793,220,805,261,817,195,832,255,844,261,856,225,868,207,880,213,895,258,907,228,919,222,931,246,946,246,958,213,970,261,982,273,997,255,1009,258,1021,237,1033,210,1048,270,1060,288,1072,291,1084,288,1099,291,1111,291,1123,281,1135,258,1150,246,1162,253,1174,243,1186,265,1201,288,1213,288,1225,270,1237,265,1249,204,1264,243,1276,250,1288,264,1300,278,1315,273,1327,273,1339,282,1351,240,1366,246,1378,189,1390,165,1402,209,1417,235,1429,208,1441,213,1453,189,1465,141];
  var ds = ['', '', ''];
  pts(0, 735, h1).concat(pts(490, 735, h2)).forEach(function (p) {
    var x = Math.round(p[0]), y = Math.round(p[1]);
    ds[colourAt(x)] += 'M' + (x - 1) + ' ' + y + 'h3V840h-3z';
  });
  ds.forEach(function (d, k) { shape(g, d, COLS[k]); });
  var pink = pts(0, 735, [180,248,210,235,250,235,300,210,340,195,380,190,420,155,470,147,510,150,550,180,620,195,680,225,730,250,800,248,850,225,900,230,950,228,1020,222,1060,210,1130,218,1210,217,1290,232,1340,225,1430,238])
    .concat(pts(490, 735, [0,225,40,213,95,218,120,233,180,238,230,228,270,248,300,258,350,265,420,275,500,282,560,280,610,258,680,240,720,222,770,208,810,208,860,228,950,235,1010,248,1050,245,1090,268,1180,272,1260,260,1320,262,1400,245,1465,215]));
  var green = pts(0, 735, [180,250,200,222,220,222,240,205,260,222,300,205,320,185,350,170,380,190,400,160,430,135,445,113,470,140,510,185,560,195,610,195,650,230,700,255,740,265,770,238,800,232,830,232,850,240,870,212,890,222,910,217,930,238,960,235,990,212,1030,205,1040,197,1080,205,1110,222,1150,230,1170,215,1210,215,1250,220,1290,235,1340,228,1390,235,1430,245])
    .concat(pts(490, 735, [0,212,15,190,30,185,50,210,80,235,110,255,130,245,165,215,200,225,225,242,245,242,270,268,300,270,350,265,370,275,410,276,430,282,510,280,560,278,590,240,620,218,650,245,680,255,710,205,735,190,770,205,800,222,820,222,850,240,870,230,930,235,960,235,1000,250,1020,258,1045,245,1100,288,1130,280,1180,255,1210,265,1240,278,1270,250,1300,248,1330,272,1370,265,1400,212,1430,205,1450,210,1465,200]));
  line(g, pink, '#ff70ff');
  line(g, green, '#8ef58e', 2);
})();

/* Date axis */
(function () {
  var g = document.getElementById('dates-g'), d = '';
  for (var x = 60; x < 1390; x += 25.4) d += 'M' + Math.round(x) + ' 841h1v3h-1z';
  [60,139,227,315,400,480,557,649,737,828,895,984,1078,1170,1260,1358,1390].forEach(function (x) { d += 'M' + x + ' 841h1V858h-1z'; });
  shape(g, d, '#c0c0c0');
})();
```
